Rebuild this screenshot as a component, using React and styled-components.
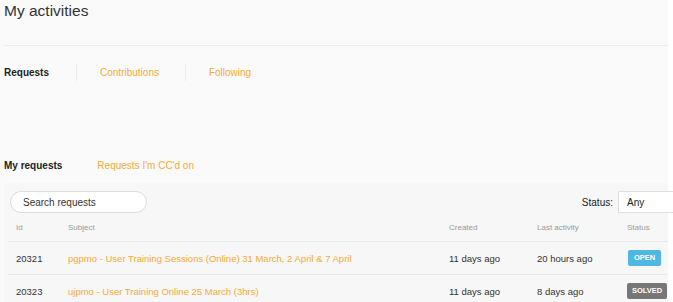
import React from "react";
import styled, { createGlobalStyle } from "styled-components";

const Global = createGlobalStyle`
  html, body { margin: 0; padding: 0; background: #ffffff; }
  body { font-family: "Liberation Sans", Arial, sans-serif; color: #333; }
  * { box-sizing: border-box; }
`;

const ORANGE = "#f6a936";

const Page = styled.div`
  width: 668px;
  background: #fafafa;
  padding: 0 0 0 4px;
  min-height: 302px;
`;

const Title = styled.h1`
  margin: 0;
  padding-top: 1px;
  height: 46px;
  font-size: 15.5px;
  font-weight: 400;
  color: #333;
  line-height: 20px;
  border-bottom: 1px solid #ebebeb;
`;

const TabBar = styled.nav`
  display: flex;
  align-items: center;
  height: 52px;
  padding-top: 1px;
`;

const Tab = styled.a`
  font-size: 10px;
  line-height: 17px;
  text-decoration: none;
  color: ${(p) => (p.$active ? "#222" : ORANGE)};
  font-weight: ${(p) => (p.$active ? 700 : 400)};
  padding: 0 ${(p) => p.$pr}px 0 ${(p) => p.$pl}px;
  border-right: ${(p) => (p.$sep ? "1px solid #ececec" : "none")};
`;

const SubBar = styled.nav`
  display: flex;
  align-items: center;
  gap: 35px;
  margin-top: 54px;
  height: 22px;
  padding-top: 5px;
`;

const SubTab = styled.a`
  font-size: 10px;
  text-decoration: none;
  color: ${(p) => (p.$active ? "#222" : ORANGE)};
  font-weight: ${(p) => (p.$active ? 700 : 400)};
`;

const Panel = styled.section`
  margin-top: 9px;
  background: #f7f7f7;
  padding: 8px 0 0 4px;
`;

const Controls = styled.div`
  display: flex;
  align-items: center;
  justify-content: space-between;
  height: 22px;
  padding-left: 2px;
`;

const Search = styled.div`
  width: 137px;
  height: 22px;
  border: 1px solid #dcdcdc;
  border-radius: 11px;
  background: #fff;
  font-size: 10px;
  color: #333;
  display: flex;
  align-items: center;
  padding-left: 12px;
`;

const StatusFilter = styled.div`
  display: flex;
  align-items: center;
  gap: 5px;
  font-size: 10px;
  color: #222;
  margin-right: -5px;
`;

const Select = styled.div`
  width: 55px;
  height: 22px;
  border: 1px solid #dedede;
  border-right: none;
  background: #fff;
  display: flex;
  align-items: center;
  padding-left: 8px;
  font-size: 10px;
  color: #222;
`;

const Row = styled.div`
  display: grid;
  grid-template-columns: 52px 381px 88px 90px 1fr;
  align-items: center;
  height: ${(p) => (p.$head ? 29 : 33)}px;
  padding-left: 8px;
  border-bottom: 1px solid #e9e9e9;
  font-size: ${(p) => (p.$head ? 8 : 9.5)}px;
  color: ${(p) => (p.$head ? "#9a9a9a" : "#333")};
`;

const Subject = styled.a`
  color: ${ORANGE};
  text-decoration: none;
`;

const Badge = styled.span`
  justify-self: start;
  display: inline-block;
  font-size: 7.5px;
  font-weight: 700;
  color: #fff;
  line-height: 16px;
  padding: 0 ${(p) => (p.$solved ? 5 : 6)}px;
  border-radius: 2px;
  background: ${(p) => (p.$solved ? "#777" : "#4fb8e2")};
  margin-left: ${(p) => (p.$solved ? 0 : 1)}px;
`;

const rows = [
  { id: "20321", subject: "pgpmo - User Training Sessions (Online) 31 March, 2 April & 7 April", created: "11 days ago", last: "20 hours ago", status: "OPEN" },
  { id: "20323", subject: "ujpmo - User Training Online 25 March (3hrs)", created: "11 days ago", last: "8 days ago", status: "SOLVED" },
];

export default function App() {
  return (
    <>
      <Global />
      <Page>
        <Title>My activities</Title>
        <TabBar>
          <Tab $active $pl={0} $pr={27} $sep>Requests</Tab>
          <Tab $pl={23} $pr={26} $sep>Contributions</Tab>
          <Tab $pl={23} $pr={0}>Following</Tab>
        </TabBar>
        <SubBar>
          <SubTab $active>My requests</SubTab>
          <SubTab>Requests I'm CC'd on</SubTab>
        </SubBar>
        <Panel>
          <Controls>
            <Search>Search requests</Search>
            <StatusFilter>
              Status:
              <Select>Any</Select>
            </StatusFilter>
          </Controls>
          <Row $head>
            <span>Id</span>
            <span>Subject</span>
            <span>Created</span>
            <span>Last activity</span>
            <span>Status</span>
          </Row>
          {rows.map((r) => (
            <Row key={r.id}>
              <span>{r.id}</span>
              <Subject href="#">{r.subject}</Subject>
              <span>{r.created}</span>
              <span>{r.last}</span>
              <Badge $solved={r.status === "SOLVED"}>{r.status}</Badge>
            </Row>
          ))}
        </Panel>
      </Page>
    </>
  );
}
